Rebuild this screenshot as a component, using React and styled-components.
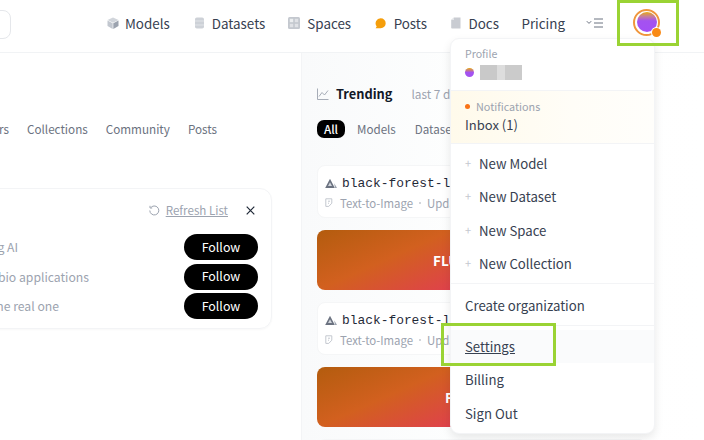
import React from "react";
import styled, { createGlobalStyle } from "styled-components";

const Global = createGlobalStyle`
  html, body { margin: 0; padding: 0; background: #fff; }
  body { width: 704px; height: 440px; overflow: hidden; font-family: "Noto Sans CJK SC", "Source Sans Pro", "Noto Sans", sans-serif; }
  * { box-sizing: border-box; }
`;

const Page = styled.div`
  position: relative;
  width: 704px;
  height: 440px;
  overflow: hidden;
  display: flex;
  flex-direction: column;
  color: #1f2937;
`;

const Header = styled.header`
  height: 53px;
  flex: none;
  display: flex;
  align-items: flex-start;
  border-bottom: 1px solid #f1f3f5;
  padding-top: 10px;
`;

const SearchBox = styled.div`
  width: 30px;
  height: 29px;
  margin-left: -19px;
  border: 1px solid #e5e7eb;
  border-radius: 8px;
  flex: none;
`;

const Nav = styled.nav`
  margin-left: 96px;
  display: flex;
  align-items: center;
  height: 26px;
`;

const NavItem = styled.a`
  display: flex;
  align-items: center;
  gap: ${(p) => p.$gap ?? 7}px;
  margin-right: ${(p) => p.$after ?? 24}px;
  font-size: 13.4px;
  line-height: 26px;
  color: #374151;
  white-space: nowrap;
`;

const Avatar = styled.div`
  position: relative;
  width: 27px;
  height: 27px;
  margin-left: 29px;
  margin-top: -2px;
  flex: none;
  border-radius: 50%;
  border: 2px solid #f0963c;
  padding: 1.5px;
`;

const AvatarFill = styled.div`
  width: 100%;
  height: 100%;
  border-radius: 50%;
  background: linear-gradient(180deg, #e8a90f 0%, #c77f9a 22%, #a452f0 44%, #a44ff5 100%);
`;

const AvatarDot = styled.span`
  position: absolute;
  right: -3px;
  bottom: -3px;
  width: 9px;
  height: 9px;
  border-radius: 50%;
  background: #f98a16;
  box-shadow: 0 0 0 1px #fff;
`;

const Main = styled.main`
  flex: 1;
  display: flex;
  min-height: 0;
`;

const Left = styled.section`
  width: 302px;
  flex: none;
  overflow: hidden;
  border-right: 1px solid #f3f4f6;
  padding: 64px 29px 0 0;
  display: flex;
  flex-direction: column;
  align-items: flex-end;
`;

const Tabs = styled.div`
  display: flex;
  align-items: center;
  gap: 18px;
  height: 24px;
  margin-right: 55px;
  font-size: 11.7px;
  line-height: 24px;
  color: #6b7280;
  white-space: nowrap;
`;

const FollowCard = styled.div`
  margin-top: 47px;
  width: 420px;
  height: 141px;
  flex: none;
  border: 1px solid #f3f4f6;
  border-radius: 12px;
  box-shadow: 0 1px 2px rgba(0, 0, 0, 0.03);
  padding: 13px 13px 0 0;
  display: flex;
  flex-direction: column;
  align-items: flex-end;
`;

const CardTop = styled.div`
  display: flex;
  align-items: center;
  height: 17px;
  margin-bottom: 15px;
  margin-right: 3px;
  font-size: 11.6px;
  color: #9ca3af;
`;

const Refresh = styled.a`
  margin-left: 6px;
  line-height: 17px;
  text-decoration: underline;
  margin-right: 18px;
`;

const Rows = styled.div`
  display: flex;
  flex-direction: column;
  gap: 3.5px;
  width: 100%;
`;

const Row = styled.div`
  display: flex;
  justify-content: flex-end;
  align-items: center;
  height: 26px;
`;

const Desc = styled.span`
  margin-right: ${(p) => p.$space}px;
  font-size: 12.2px;
  line-height: 18px;
  color: #9ca3af;
  white-space: nowrap;
`;

const FollowButton = styled.button`
  width: 74px;
  height: 26px;
  border: 0;
  border-radius: 13px;
  background: #000;
  color: #fff;
  font: 400 12.4px/25px "Noto Sans CJK SC", sans-serif;
  padding: 0;
`;

const Right = styled.section`
  flex: 1;
  min-width: 0;
  overflow: hidden;
  background: linear-gradient(to right, #f9fafb, #fdfefe 40%, #fff);
  padding: 30px 0 0 15px;
`;

const TrendingHead = styled.div`
  display: flex;
  align-items: center;
  height: 22px;
`;

const TrendingTitle = styled.h2`
  margin: 0 0 0 7px;
  font-size: 12.8px;
  line-height: 22px;
  font-weight: 700;
  color: #111827;
`;

const Muted = styled.span`
  margin-left: 19px;
  font-size: 11.8px;
  line-height: 22px;
  color: #9ca3af;
  white-space: nowrap;
`;

const Filters = styled.div`
  margin-top: 15px;
  display: flex;
  align-items: center;
  height: 18px;
  font-size: 11.6px;
  color: #6b7280;
  white-space: nowrap;
`;

const ActiveFilter = styled.span`
  width: 28px;
  height: 18px;
  border-radius: 7px;
  background: #000;
  color: #fff;
  text-align: center;
  line-height: 18px;
  font-weight: 500;
  margin-right: 12px;
`;

const Filter = styled.span`
  margin-right: 19px;
  line-height: 18px;
`;

const Feed = styled.div`
  margin-top: 27px;
  width: 330px;
  display: flex;
  flex-direction: column;
  gap: 12px;
`;

const ModelCard = styled.div`
  height: 53px;
  background: #fff;
  border-radius: 8px;
  border: 1px solid #f5f6f7;
  padding: 7px 0 0 7px;
  overflow: hidden;
`;

const ModelName = styled.div`
  display: flex;
  align-items: center;
  gap: 5px;
  height: 20px;
  font-family: "Liberation Mono", monospace;
  font-size: 12.9px;
  color: #1f2937;
  white-space: nowrap;
`;

const ModelMeta = styled.div`
  display: flex;
  align-items: center;
  gap: 5px;
  height: 20px;
  font-size: 11.4px;
  line-height: 20px;
  color: #9ca3af;
  white-space: nowrap;
`;

const Bullet = styled.span`
  width: 2px;
  height: 2px;
  border-radius: 50%;
  background: #c4c8cf;
  margin: 0 1px;
`;

const Banner = styled.div`
  height: 60px;
  border-radius: 8px;
  background: linear-gradient(156deg, #b35c0e 0, #d2601f 55px, #e0404e 112px);
  color: #fff;
  font-size: 13.5px;
  font-weight: 700;
  line-height: 60px;
  padding-left: ${(p) => p.$indent}px;
  white-space: nowrap;
`;

const Menu = styled.div`
  position: absolute;
  left: 450px;
  top: 38px;
  width: 205px;
  height: 396px;
  background: #fff;
  border-radius: 9px;
  border: 1px solid #f3f4f6;
  box-shadow: 0 4px 10px rgba(0, 0, 0, 0.09);
  overflow: hidden;
  display: flex;
  flex-direction: column;
  font-size: 13.2px;
  color: #374151;
`;

const ProfileBlock = styled.div`
  height: 52px;
  flex: none;
  padding: 6px 14px 0;
  border-bottom: 1px solid #f3f4f6;
`;

const SmallLabel = styled.div`
  font-size: 10.6px;
  line-height: 17px;
  color: #9ca3af;
`;

const UserRow = styled.div`
  display: flex;
  align-items: center;
  gap: 6px;
  margin-top: 3px;
  height: 15px;
`;

const MiniAvatar = styled.span`
  width: 9px;
  height: 9px;
  border-radius: 50%;
  background: linear-gradient(180deg, #e8a90f 0%, #a452f0 50%);
`;

const Redacted = styled.span`
  width: 42px;
  height: 15px;
  background: linear-gradient(to right, #c9c9c9 0 17px, #dddddd 17px 25px, #cbcbcb 25px);
`;

const NoticeBlock = styled.div`
  height: 53px;
  flex: none;
  padding: 7px 14px 0;
  background: linear-gradient(to right, #fffaeb, #fffdf7 60%, #fffefb);
  border-bottom: 1px solid #f3f4f6;
`;

const NoticeHead = styled.div`
  display: flex;
  align-items: center;
  gap: 6px;
  font-size: 10.8px;
  line-height: 17px;
  color: #9ca3af;
`;

const OrangeDot = styled.span`
  width: 5px;
  height: 5px;
  border-radius: 50%;
  background: #f97316;
`;

const NoticeLink = styled.div`
  font-size: 13px;
  line-height: 19px;
`;

const CreateList = styled.div`
  flex: none;
  padding-top: 3px;
  height: 140px;
  border-bottom: 1px solid #f3f4f6;
`;

const MenuItem = styled.div`
  height: 33.3px;
  line-height: 33px;
  padding-left: 14px;
  white-space: nowrap;
  display: flex;
  align-items: center;
  gap: 8px;
  background: ${(p) => (p.$hover ? "#fafbfc" : "transparent")};
  text-decoration: ${(p) => (p.$hover ? "underline" : "none")};
`;

const Plus = styled.span`
  width: 6px;
  color: #c4c8cf;
  font-size: 11px;
  line-height: 1;
`;

const OrgBlock = styled.div`
  flex: none;
  height: 42px;
  border-bottom: 1px solid #f3f4f6;
  padding-top: 5px;
`;

const BottomList = styled.div`
  padding-top: 4px;
`;

const Highlight = styled.div`
  position: absolute;
  left: ${(p) => p.$x}px;
  top: ${(p) => p.$y}px;
  width: ${(p) => p.$w}px;
  height: ${(p) => p.$h}px;
  border: 3px solid #9ad334;
  pointer-events: none;
`;

const Cube = () => (
  <svg width="12" height="12" viewBox="0 0 12 12"><path d="M6 .5 11.5 3 6 5.8.5 3z" fill="#d1d5db" /><path d="M.5 3.4 5.7 6.2V12L.5 9z" fill="#c2c7cf" /><path d="M11.5 3.4 6.3 6.2V12l5.2-3z" fill="#9ca3af" /></svg>
);
const Db = () => (
  <svg width="11" height="12" viewBox="0 0 11 12"><rect x="1" y="0.5" width="9" height="11" rx="1.8" fill="#cdd1d7" /><path d="M1 4h9M1 8h9" stroke="#e1e4e8" /></svg>
);
const Grid = () => (
  <svg width="12" height="12" viewBox="0 0 12 12"><rect width="12" height="12" rx="1.5" fill="#c4c8cf" /><rect x="1.8" y="1.8" width="3.4" height="3.4" fill="#eceef0" /><rect x="6.8" y="1.8" width="3.4" height="3.4" fill="#e0e2e6" /><rect x="1.8" y="6.8" width="3.4" height="3.4" fill="#e0e2e6" /><rect x="6.8" y="6.8" width="3.4" height="3.4" fill="#e0e2e6" /></svg>
);
const Bubble = () => (
  <svg width="11" height="11" viewBox="0 0 11 11"><path d="M5.7.3a5 5 0 0 1 0 10H.6l1.1-1.9A5 5 0 0 1 5.7.3z" fill="#f59e0b" /></svg>
);
const Doc = () => (
  <svg width="10" height="12" viewBox="0 0 10 12"><path d="M3 .5h6.5v11H1a.8.8 0 0 1-.8-.8V3z" fill="#c9ccd2" /><path d="M3 .5V3H.2z" fill="#e4e6e9" /></svg>
);
const MenuGlyph = () => (
  <svg width="18" height="10" viewBox="0 0 18 10" fill="none" stroke="#6b7280"><path d="m.8 3.2 2.2 2.2 2.2-2.2" /><path d="M8 1h9M8 5h9M8 9h9" /></svg>
);
const Chart = () => (
  <svg width="12" height="12" viewBox="0 0 12 12" fill="none" stroke="#9ca3af" strokeWidth="0.9"><path d="M.5.5v11h11" /><path d="m2 8.5 3-4 2.5 2.5L11 2.5" /></svg>
);
const RefreshIcon = () => (
  <svg width="11" height="11" viewBox="0 0 11 11" fill="none" stroke="#9ca3af"><path d="M2.2 2.2a4.5 4.5 0 1 1-1.4 3.3" /><path d="M1 .8v2.2h2.2" /></svg>
);
const Close = () => (
  <svg width="9" height="9" viewBox="0 0 9 9" stroke="#1f2937" strokeWidth="1.2"><path d="m.7.7 7.6 7.6M8.3.7.7 8.3" /></svg>
);
const Mountain = () => (
  <svg width="12" height="11" viewBox="0 0 12 11"><path d="M5 .8 9.8 10H.2z" fill="#6b7280" /><path d="m5 4.2 2 3.8H3z" fill="#d1d5db" /><path d="M9.2 5.2 12 10H9.9z" fill="#9ca3af" /></svg>
);
const Tag = () => (
  <svg width="10" height="10" viewBox="0 0 10 10" fill="none" stroke="#c4c8cf"><path d="M.8.8h6v4.4l-3 3.2H.8z" /><path d="M3 3.2h2M3 5.2h1" /></svg>
);

const ModelEntry = () => (
  <ModelCard>
    <ModelName><Mountain />black-forest-labs/FLUX.1-dev</ModelName>
    <ModelMeta><Tag /><span>Text-to-Image</span><Bullet /><span>Updated 2 days ago</span></ModelMeta>
  </ModelCard>
);

export default function App() {
  return (
    <Page>
      <Global />
      <Header>
        <SearchBox />
        <Nav>
          <NavItem $gap={6}><Cube />Models</NavItem>
          <NavItem $gap={7} $after={23}><Db />Datasets</NavItem>
          <NavItem $gap={7} $after={23.5}><Grid />Spaces</NavItem>
          <NavItem $gap={8} $after={23.5}><Bubble />Posts</NavItem>
          <NavItem $gap={8} $after={22.5}><Doc />Docs</NavItem>
          <NavItem $after={21}>Pricing</NavItem>
          <MenuGlyph />
          <Avatar>
            <AvatarFill />
            <AvatarDot />
          </Avatar>
        </Nav>
      </Header>
      <Main>
        <Left>
          <Tabs>
            <span>Users</span>
            <span>Collections</span>
            <span>Community</span>
            <span>Posts</span>
          </Tabs>
          <FollowCard>
            <CardTop>
              <RefreshIcon />
              <Refresh>Refresh List</Refresh>
              <Close />
            </CardTop>
            <Rows>
              <Row><Desc $space={166}>Building AI</Desc><FollowButton>Follow</FollowButton></Row>
              <Row><Desc $space={95}>Deep learning for bio applications</Desc><FollowButton>Follow</FollowButton></Row>
              <Row><Desc $space={125}>Accept no imitation, the real one</Desc><FollowButton>Follow</FollowButton></Row>
            </Rows>
          </FollowCard>
        </Left>
        <Right>
          <TrendingHead>
            <Chart />
            <TrendingTitle>Trending</TrendingTitle>
            <Muted>last 7 days</Muted>
          </TrendingHead>
          <Filters>
            <ActiveFilter>All</ActiveFilter>
            <Filter>Models</Filter>
            <Filter>Datasets</Filter>
            <Filter>Spaces</Filter>
          </Filters>
          <Feed>
            <ModelEntry />
            <Banner $indent={116}>FLUX.1</Banner>
            <ModelEntry />
            <Banner $indent={128}>FLUX</Banner>
            <ModelEntry />
          </Feed>
        </Right>
      </Main>
      <Menu>
        <ProfileBlock>
          <SmallLabel>Profile</SmallLabel>
          <UserRow><MiniAvatar /><Redacted /></UserRow>
        </ProfileBlock>
        <NoticeBlock>
          <NoticeHead><OrangeDot />Notifications</NoticeHead>
          <NoticeLink>Inbox (1)</NoticeLink>
        </NoticeBlock>
        <CreateList>
          <MenuItem><Plus>+</Plus>New Model</MenuItem>
          <MenuItem><Plus>+</Plus>New Dataset</MenuItem>
          <MenuItem><Plus>+</Plus>New Space</MenuItem>
          <MenuItem><Plus>+</Plus>New Collection</MenuItem>
        </CreateList>
        <OrgBlock><MenuItem>Create organization</MenuItem></OrgBlock>
        <BottomList>
          <MenuItem $hover>Settings</MenuItem>
          <MenuItem>Billing</MenuItem>
          <MenuItem>Sign Out</MenuItem>
        </BottomList>
      </Menu>
      <Highlight $x={617} $y={0} $w={62} $h={46} />
      <Highlight $x={441} $y={323} $w={115} $h={43} />
    </Page>
  );
}
